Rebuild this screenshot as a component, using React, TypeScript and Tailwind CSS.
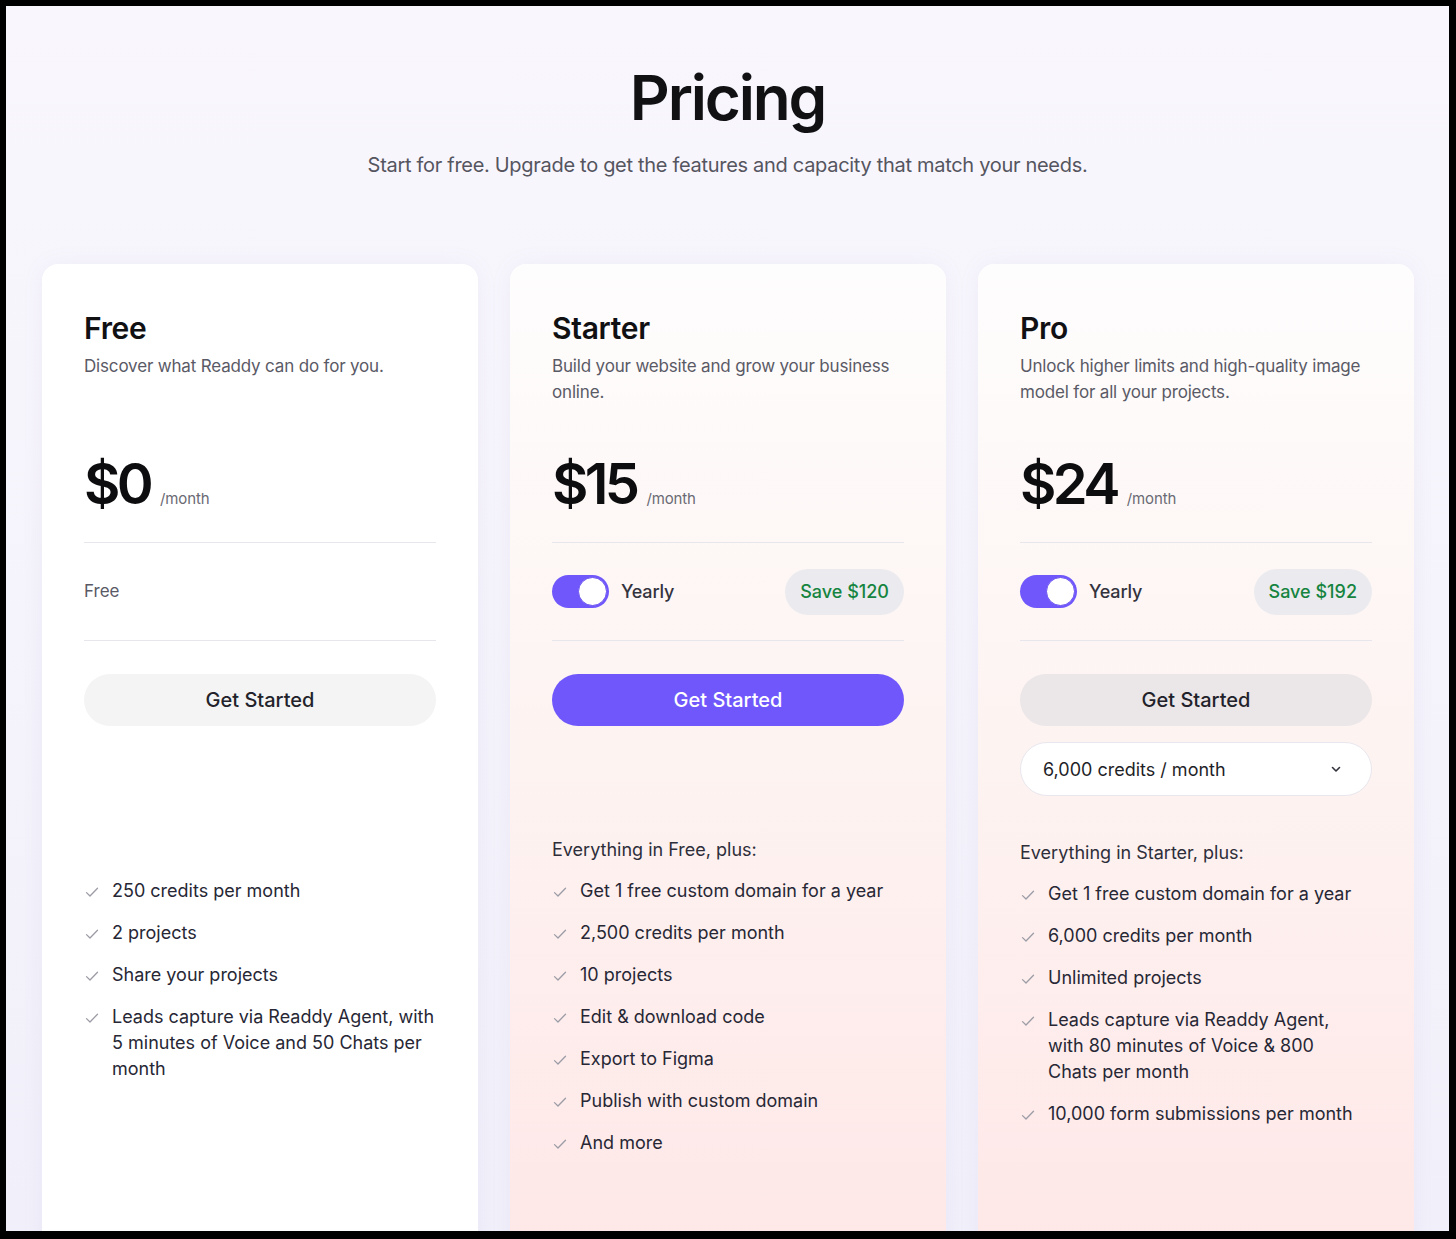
import React from "react";

function CheckIcon() {
  return (
    <svg width="16" height="16" viewBox="0 0 16 16" fill="none" stroke="#9c9ca6" strokeWidth="1.3" strokeLinecap="round" strokeLinejoin="round" className="shrink-0 mt-[6px]">
      <path d="M2.5 8.6 L6 12 L13.5 4.2" />
    </svg>
  );
}

function Chevron() {
  return (
    <svg width="14" height="14" viewBox="0 0 14 14" fill="none" stroke="#333340" strokeWidth="1.6" strokeLinecap="round" strokeLinejoin="round">
      <path d="M3.5 5.5 L7 9 L10.5 5.5" />
    </svg>
  );
}

function Toggle() {
  return (
    <div className="w-[57px] h-[33px] rounded-full bg-[#6f57fb] flex items-center justify-end pr-[2px]">
      <div className="w-[29px] h-[29px] rounded-full bg-white border-[1.5px] border-[#6a52f0]" />
    </div>
  );
}

type Plan = {
  name: string;
  desc: string;
  price: string;
  yearly?: string;
  free?: boolean;
  primary?: boolean;
  dropdown?: boolean;
  header?: string;
  listClass: string;
  features: string[];
};

const plans: Plan[] = [
  {
    name: "Free",
    desc: "Discover what Readdy can do for you.",
    price: "$0",
    free: true,
    listClass: "w-full",
    features: [
      "250 credits per month",
      "2 projects",
      "Share your projects",
      "Leads capture via Readdy Agent, with 5 minutes of Voice and 50 Chats per month",
    ],
  },
  {
    name: "Starter",
    desc: "Build your website and grow your business online.",
    price: "$15",
    yearly: "Save $120",
    primary: true,
    header: "Everything in Free, plus:",
    listClass: "w-full",
    features: [
      "Get 1 free custom domain for a year",
      "2,500 credits per month",
      "10 projects",
      "Edit & download code",
      "Export to Figma",
      "Publish with custom domain",
      "And more",
    ],
  },
  {
    name: "Pro",
    desc: "Unlock higher limits and high-quality image model for all your projects.",
    price: "$24",
    yearly: "Save $192",
    dropdown: true,
    header: "Everything in Starter, plus:",
    listClass: "w-[336px]",
    features: [
      "Get 1 free custom domain for a year",
      "6,000 credits per month",
      "Unlimited projects",
      "Leads capture via Readdy Agent, with 80 minutes of Voice & 800 Chats per month",
      "10,000 form submissions per month",
    ],
  },
];

function Card({ plan }: { plan: Plan }) {
  const bg = plan.free
    ? "bg-white"
    : "bg-linear-to-b from-[#fefdfd] via-[#fdf3f1] to-[#fee7e7]";
  return (
    <div className={`w-[436px] shrink-0 h-[1000px] rounded-[16px] ${bg} shadow-[0_0_22px_rgba(110,100,170,0.07)] px-[42px] pt-[46px]`}>
      <div className="h-[145px]">
        <h2 className="text-[30px] leading-[36px] font-semibold text-[#111114] tracking-[-0.01em]">{plan.name}</h2>
        <p className="mt-[7px] text-[17px] leading-[26px] text-[#5a5a66] tracking-[-0.01em]">{plan.desc}</p>
      </div>
      <div className="h-[58px] flex items-baseline gap-[10px]">
        <span className="text-[56px] leading-[58px] font-semibold text-[#0d0d10] tracking-[-0.065em]">{plan.price}</span>
        <span className="text-[15px] text-[#6a6a74] tracking-[-0.01em]">/month</span>
      </div>
      <div className="mt-[29px] h-[99px] border-y border-[#e7e6ec] flex items-center justify-between">
        {plan.free ? (
          <span className="text-[17px] text-[#5a5a66]">Free</span>
        ) : (
          <>
            <div className="flex items-center gap-[12px]">
              <Toggle />
              <span className="text-[18px] font-medium text-[#33333d] tracking-[-0.01em]">Yearly</span>
            </div>
            <span className="h-[46px] px-[15px] rounded-full bg-[#ebebef] flex items-center text-[18px] font-medium text-[#16843f]">{plan.yearly}</span>
          </>
        )}
      </div>
      <div className="pt-[33px] pb-[42px] min-h-[194px]">
        <button
          className={`w-full h-[52px] rounded-full text-[20px] font-medium flex items-center justify-center ${
            plan.primary
              ? "bg-[#6f57fc] text-white"
              : plan.dropdown
              ? "bg-[#ebe6e8] text-[#22222a]"
              : "bg-[#f4f4f5] text-[#22222a]"
          }`}
        >
          Get Started
        </button>
        {plan.dropdown && (
          <div className="mt-[16px] h-[54px] rounded-full bg-white border border-[#e8e6ee] flex items-center justify-between pl-[22px] pr-[28px]">
            <span className="text-[18px] text-[#1f1f28]">6,000 credits / month</span>
            <Chevron />
          </div>
        )}
      </div>
      <div className="mt-[2px] h-[26px] text-[18px] leading-[26px] text-[#2e2e3a]">{plan.header ?? ""}</div>
      <ul className={`mt-[15px] flex flex-col gap-[16px] ${plan.listClass}`}>
        {plan.features.map((f) => (
          <li key={f} className="flex gap-[12px] text-[18px] leading-[26px] text-[#272735]">
            <CheckIcon />
            <span>{f}</span>
          </li>
        ))}
      </ul>
    </div>
  );
}

export default function App() {
  return (
    <div className="w-[1456px] h-[1239px] bg-black pt-[6px] pl-[6px] font-['Inter','Noto_Sans',sans-serif]">
      <div className="w-[1443px] h-[1225px] overflow-hidden bg-linear-to-b from-[#f9f7fd] to-[#f1f0fa]">
        <div className="pt-[60px] flex flex-col items-center">
          <h1 className="text-[62px] leading-[64px] font-semibold text-[#111114] tracking-[-0.035em]">Pricing</h1>
          <p className="mt-[21px] text-[20px] leading-[28px] text-[#55555f] tracking-[-0.015em]">
            Start for free. Upgrade to get the features and capacity that match your needs.
          </p>
        </div>
        <div className="mt-[85px] w-[1372px] ml-[36px] flex gap-[32px]">
          {plans.map((p) => (
            <Card key={p.name} plan={p} />
          ))}
        </div>
      </div>
    </div>
  );
}
